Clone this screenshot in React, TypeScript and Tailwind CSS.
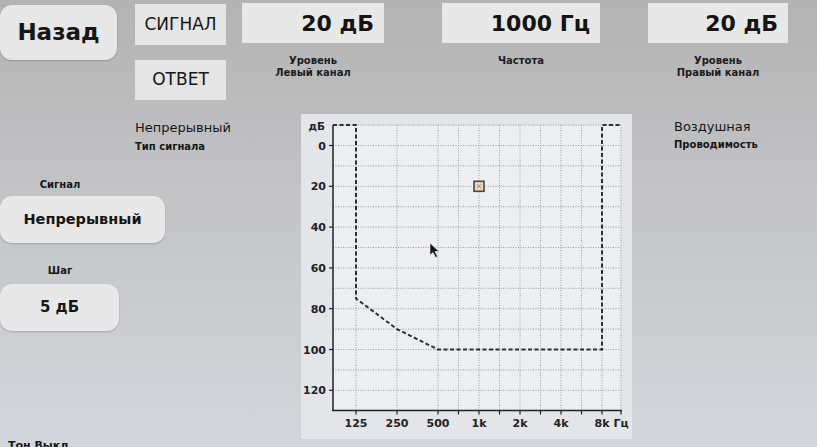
import React from "react";

// audiogram geometry (panel-local px)
const PLOT_L = 32;
const PLOT_R = 320;
const PLOT_T = 11;
const PLOT_B = 296.5;

const yOf = (db: number) => 31.5 + db * 2.04;
const xOct = (i: number) => 55 + i * 41; // 125, 250, 500, 1k ...

const freqLabels = ["125", "250", "500", "1k", "2k", "4k", "8k"];
const gridX = [
  xOct(0),
  xOct(1),
  xOct(2),
  xOct(2.5),
  xOct(3),
  xOct(3.5),
  xOct(4),
  xOct(4.5),
  xOct(5),
  xOct(5.5),
  xOct(6),
  PLOT_R,
];
const gridDb = Array.from({ length: 14 }, (_, i) => -10 + i * 10);
const dbLabels = [0, 20, 40, 60, 80, 100, 120];

const maskPath = [
  `M ${PLOT_L} ${PLOT_T}`,
  `H ${xOct(0)}`,
  `V ${yOf(75)}`,
  `L ${xOct(1)} ${yOf(90)}`,
  `L ${xOct(2)} ${yOf(100)}`,
  `H ${xOct(6)}`,
  `V ${PLOT_T}`,
  `H ${PLOT_R}`,
].join(" ");

function Audiogram() {
  const mx = xOct(3);
  const my = yOf(20);
  return (
    <svg
      width={331}
      height={326}
      viewBox="0 0 331 326"
      className="block"
      style={{ fontFamily: "'DejaVu Sans', sans-serif" }}
    >
      <rect
        x={PLOT_L}
        y={PLOT_T}
        width={PLOT_R - PLOT_L}
        height={PLOT_B - PLOT_T}
        fill="#eceef2"
      />
      {gridDb.map((db) => (
        <line
          key={db}
          x1={PLOT_L}
          x2={PLOT_R}
          y1={yOf(db)}
          y2={yOf(db)}
          stroke="#9c9ea3"
          strokeWidth={1}
          strokeDasharray="1 1.5"
        />
      ))}
      {gridX.map((x) => (
        <line
          key={x}
          x1={x}
          x2={x}
          y1={PLOT_T}
          y2={PLOT_B}
          stroke="#9c9ea3"
          strokeWidth={1}
          strokeDasharray="1 1.5"
        />
      ))}
      <path
        d={maskPath}
        fill="none"
        stroke="#2e3036"
        strokeWidth={2}
        strokeDasharray="4 2.5"
      />
      {/* axes */}
      <line x1={PLOT_L} x2={PLOT_L} y1={PLOT_T} y2={PLOT_B} stroke="#202226" strokeWidth={1.5} />
      <line x1={PLOT_L - 1} x2={PLOT_R + 1} y1={PLOT_B} y2={PLOT_B} stroke="#202226" strokeWidth={1.5} />
      {dbLabels.map((db) => (
        <g key={db}>
          <line x1={PLOT_L - 4} x2={PLOT_L} y1={yOf(db)} y2={yOf(db)} stroke="#202226" strokeWidth={1.2} />
          <text
            x={25}
            y={yOf(db) + 4}
            textAnchor="end"
            fontSize={11}
            fontWeight={700}
            fill="#222"
          >
            {db}
          </text>
        </g>
      ))}
      <text x={24} y={16} textAnchor="end" fontSize={10.5} fontWeight={700} fill="#222">
        дБ
      </text>
      {gridX.map((x) => (
        <line key={`t${x}`} x1={x} x2={x} y1={PLOT_B} y2={PLOT_B + 4} stroke="#202226" strokeWidth={1.2} />
      ))}
      {freqLabels.map((f, i) => (
        <text
          key={f}
          x={xOct(i)}
          y={313}
          textAnchor="middle"
          fontSize={11}
          fontWeight={700}
          fill="#222"
        >
          {f}
        </text>
      ))}
      <text x={320} y={313} textAnchor="middle" fontSize={11} fontWeight={700} fill="#222">
        Гц
      </text>
      {/* current tone marker */}
      <rect
        x={mx - 5}
        y={my - 5}
        width={10}
        height={10}
        fill="#e7d6cf"
        stroke="#44502c"
        strokeWidth={1.6}
      />
      <path
        d={`M ${mx - 2} ${my - 2} L ${mx + 2} ${my + 2} M ${mx + 2} ${my - 2} L ${mx - 2} ${my + 2}`}
        stroke="#d04a5a"
        strokeWidth={0.8}
      />
      {/* mouse pointer */}
      <path
        d="M 129 129 L 129 141 L 132 138.5 L 134.5 143.5 L 136.5 142.5 L 134 137.5 L 138 137.5 Z"
        fill="#15161a"
        stroke="#f2f2f2"
        strokeWidth={0.6}
      />
    </svg>
  );
}

function ValueBox({
  value,
  lines,
  width,
  className,
}: {
  value: string;
  lines: string[];
  width: string;
  className: string;
}) {
  return (
    <div className={`mt-[3px] ${width} ${className}`}>
      <div className="flex h-[40px] items-center justify-end bg-[#e8e8e8] pr-[10px] text-[22px] font-bold text-[#141414]">
        {value}
      </div>
      <div className="mt-[12px] text-center text-[10px] font-bold leading-[12px] text-[#1c1c1c]">
        {lines.map((l) => (
          <div key={l}>{l}</div>
        ))}
      </div>
    </div>
  );
}

export default function App() {
  return (
    <div className="h-[447px] w-[817px] overflow-hidden bg-linear-to-b from-[#b3b3b4] via-[#c5c6c8] to-[#d3d6dc] font-['DejaVu_Sans',sans-serif] text-[#161616]">
      <div className="flex h-[114px] items-start">
        <button
          type="button"
          className="mt-[5px] flex h-[55px] w-[117px] items-center justify-center rounded-[12px] bg-[#e7e7e7] text-[23px] font-bold shadow-[0_1px_2px_rgba(0,0,0,0.2)]"
        >
          Назад
        </button>
        <div className="ml-[18px] mt-[4px] flex flex-col gap-[15px]">
          <div className="flex h-[41px] w-[91px] items-center justify-center bg-[#e5e5e5] text-[17px]">
            СИГНАЛ
          </div>
          <div className="flex h-[40px] w-[91px] items-center justify-center bg-[#e5e5e5] text-[17px]">
            ОТВЕТ
          </div>
        </div>
        <ValueBox value="20 дБ" lines={["Уровень", "Левый канал"]} width="w-[142px]" className="ml-[16px]" />
        <ValueBox value="1000 Гц" lines={["Частота"]} width="w-[158px]" className="ml-[58px]" />
        <ValueBox value="20 дБ" lines={["Уровень", "Правый канал"]} width="w-[140px]" className="ml-[48px]" />
      </div>

      <div className="flex h-[325px]">
        <div className="flex w-[301px] flex-col">
          <div className="pl-[135px] pt-[6px]">
            <div className="text-[13px] leading-[16px]">Непрерывный</div>
            <div className="mt-[5px] text-[10px] font-bold leading-[12px]">Тип сигнала</div>
          </div>
          <div className="mt-[26px] w-[120px] text-center text-[10px] font-bold leading-[12px]">Сигнал</div>
          <div className="mt-[5px] flex h-[47px] w-[165px] items-center justify-center rounded-[12px] bg-[#e8e8e8] text-[14.5px] font-bold shadow-[0_1px_2px_rgba(0,0,0,0.2)]">
            Непрерывный
          </div>
          <div className="mt-[22px] w-[120px] text-center text-[10px] font-bold leading-[12px]">Шаг</div>
          <div className="mt-[7px] flex h-[47px] w-[119px] items-center justify-center rounded-[12px] bg-[#e8e8e8] text-[15px] font-bold shadow-[0_1px_2px_rgba(0,0,0,0.2)]">
            5 дБ
          </div>
        </div>
        <div className="h-[325px] w-[331px] overflow-hidden bg-[#e3e5e9]">
          <Audiogram />
        </div>
        <div className="pl-[42px] pt-[5px]">
          <div className="text-[13px] leading-[16px]">Воздушная</div>
          <div className="mt-[4px] text-[10px] font-bold leading-[12px]">Проводимость</div>
        </div>
      </div>

      <div className="pl-[8px] text-[11px] font-bold leading-[13px]">Тон Выкл</div>
    </div>
  );
}
